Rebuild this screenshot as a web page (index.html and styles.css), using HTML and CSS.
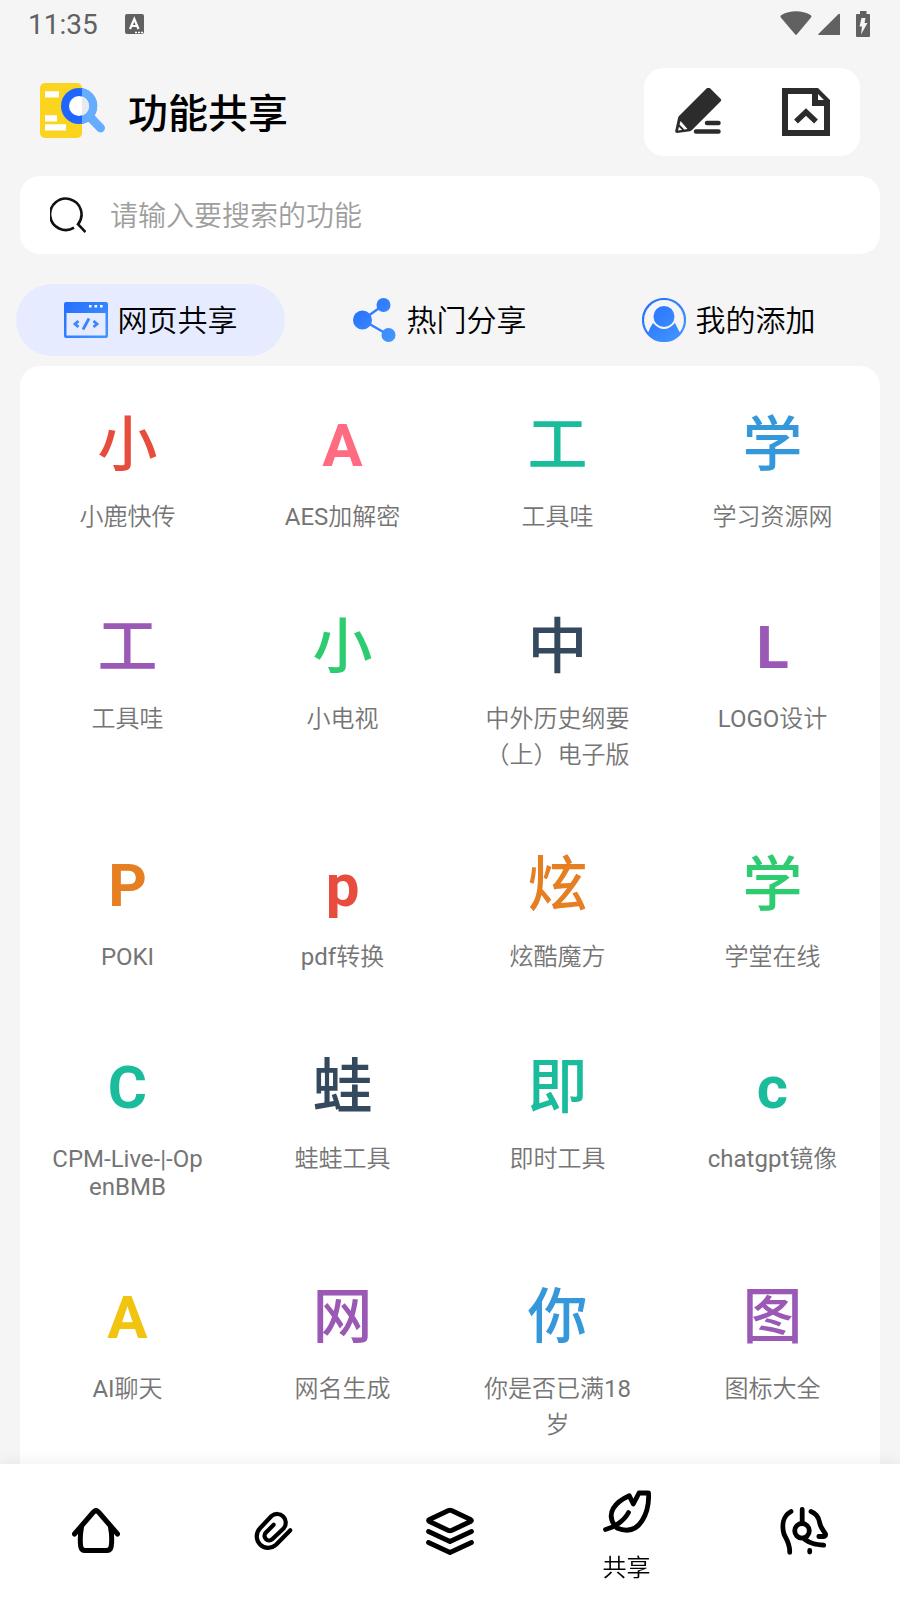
FILE: index.html
```html
<!DOCTYPE html>
<html lang="zh-CN">
<head>
    <meta charset="UTF-8">
    <meta name="viewport" content="width=device-width, initial-scale=1">
    <title>功能共享</title>
    <link rel="stylesheet" href="styles.css">
</head>
<body>
    <div class="status-bar">
        <span class="status-time">11:35</span>
        <svg class="status-app" width="20" height="20" viewBox="0 0 20 20">
            <rect width="19" height="20" rx="2" fill="#616161"/>
            <path d="M5 15L9.300 5L13.500 15M6.500 12H12" fill="none" stroke="#fff" stroke-width="2.200"/>
            <path d="M10 18.500H18" stroke="#fff" stroke-width="1.500" stroke-dasharray="2 1"/>
        </svg>
        <div class="status-icons">
            <svg width="32" height="26" viewBox="0 0 32 26">
                <path d="M.8 6.500Q-.2 5 1.500 4C10-.9 22-.9 30.500 4Q32 5 31 6.500L17 23.300Q16 24.500 15 23.300Z" fill="#616161"/>
            </svg>
            <svg width="22" height="26" viewBox="0 0 22 26">
                <path d="M20 3.500Q22 2 22 4V24H1Q-.5 24 .7 22.700Z" fill="#616161"/>
            </svg>
            <svg class="status-battery" width="14" height="26" viewBox="0 0 14 26">
                <path d="M4 0H10.500V3H13Q14 3 14 4V25Q14 26 13 26H1Q0 26 0 25V4Q0 3 1 3H4Z" fill="#616161"/>
                <path d="M5.500 7H9.500L8.500 12H11.500L5 23.500L6 15.500H3.500Z" fill="#f5f5f5"/>
            </svg>
        </div>
    </div>

    <header class="header">
        <svg class="logo" width="66" height="60" viewBox="0 0 66 60">
            <rect x="0" y="1" width="42" height="55" rx="5" fill="#fad41f"/>
            <path d="M5 9.300H19V15.500H5ZM5 33.300H17V39.500H5ZM5 42.300H26V48.500H5Z" fill="#fff"/>
            <path d="M50 35L60.500 46" stroke="#66adff" stroke-width="9" stroke-linecap="round"/>
            <circle cx="39" cy="24" r="18" fill="#1f66ff"/>
            <path d="M42 6.200A18 18 0 0 1 42 41.800Z" fill="#66adff"/>
            <circle cx="39" cy="24" r="10" fill="#fff"/>
            <path d="M42 14.500A10 10 0 0 1 42 33.500Z" fill="#e8eaf0"/>
        </svg>
        <h1 class="title">功能共享</h1>
        <div class="actions">
            <button class="action" aria-label="编辑">
                <svg width="48" height="48" viewBox="0 1 48 48">
                    <path d="M32.500 1.500Q34.500 0 36.300 1.500L46.500 11.700Q48 13 46.500 14.600L18 43Q17 44 16 44.200L3 46Q1 46 1.200 44L4 31Q4.200 30 5 29Z" fill="#2c2c2c"/>
                    <path d="M6.500 34L13.500 42L4 43.500Z" fill="#fff"/>
                    <path d="M4.500 38L9.500 43" stroke="#2c2c2c" stroke-width="1.800"/>
                    <path d="M33 36H44.500M22 44.500H44.500" stroke="#2c2c2c" stroke-width="4.500" stroke-linecap="round"/>
                </svg>
            </button>
            <button class="action" aria-label="上传">
                <svg width="48" height="48" viewBox="0 0 48 48">
                    <path d="M0 0H36L48 12V48H0ZM6 6V42H42V18H30V6ZM36 6V12H42Z" fill="#2c2c2c" fill-rule="evenodd"/>
                    <path d="M14 33.500L24 24L34 33.500" fill="none" stroke="#2c2c2c" stroke-width="5.500"/>
                </svg>
            </button>
        </div>
    </header>

    <label class="search">
        <svg width="36" height="36" viewBox="0 0 36 36" fill="none" stroke="#111" stroke-width="2.600">
            <path d="M24 30.700A15.700 15.700 0 1 1 28 27.200L35.500 35"/>
        </svg>
        <input class="search-input" type="text" placeholder="请输入要搜索的功能" aria-label="搜索功能">
    </label>

    <div class="tabs">
        <button class="tab active">
            <svg width="44" height="44" viewBox="0 0 44 44">
                <defs>
                    <linearGradient id="blue" x1="0" y1="0" x2="44" y2="44" gradientUnits="userSpaceOnUse">
                        <stop offset="0" stop-color="#246bff"/>
                        <stop offset="1" stop-color="#4599ff"/>
                    </linearGradient>
                </defs>
                <path d="M2 4H42Q44 4 44 6V38Q44 40 42 40H2Q0 40 0 38V6Q0 4 2 4ZM2.500 15V37.500H41.500V15Z" fill="url(#blue)" fill-rule="evenodd"/>
                <path d="M25 8.300H27.600M30.500 8.300H33.100M36 8.300H38.600" stroke="#fff" stroke-width="2.600"/>
                <path d="M14.500 23L11 26L14.500 29M29.500 23L33 26L29.500 29M25 20.500L19 31.500" fill="none" stroke="#3a84ff" stroke-width="2.800"/>
            </svg>
            <span class="tab-text">网页共享</span>
        </button>
        <button class="tab">
            <svg width="44" height="44" viewBox="0 0 44 44">
                <path d="M9.500 22L30.500 7M9.500 22L35.500 37" stroke="#3580ff" stroke-width="2.500"/>
                <g fill="url(#blue)">
                    <circle cx="9.500" cy="22" r="9.500"/>
                    <circle cx="30.500" cy="7" r="7"/>
                    <circle cx="35.500" cy="37" r="7"/>
                </g>
            </svg>
            <span class="tab-text">热门分享</span>
        </button>
        <button class="tab">
            <svg width="44" height="44" viewBox="0 0 44 44">
                <circle cx="22" cy="22" r="21" fill="none" stroke="url(#blue)" stroke-width="2.200"/>
                <circle cx="22" cy="18.500" r="10.500" fill="url(#blue)"/>
                <path d="M11 25Q22 37 33 25L37.500 34L39 34A21 21 0 0 1 5 34L6.500 34L8 30Z" fill="url(#blue)"/>
            </svg>
            <span class="tab-text">我的添加</span>
        </button>
    </div>

    <main class="grid">
        <a class="item red" href="#"><b class="letter han">小</b><span class="name">小鹿快传</span></a>
        <a class="item pink" href="#"><b class="letter">A</b><span class="name">AES加解密</span></a>
        <a class="item teal" href="#"><b class="letter han">工</b><span class="name">工具哇</span></a>
        <a class="item blue" href="#"><b class="letter han">学</b><span class="name">学习资源网</span></a>

        <a class="item purple" href="#"><b class="letter han">工</b><span class="name">工具哇</span></a>
        <a class="item green" href="#"><b class="letter han">小</b><span class="name">小电视</span></a>
        <a class="item navy" href="#"><b class="letter han">中</b><span class="name">中外历史纲要（上）电子版</span></a>
        <a class="item purple" href="#"><b class="letter">L</b><span class="name">LOGO设计</span></a>

        <a class="item orange" href="#"><b class="letter">P</b><span class="name">POKI</span></a>
        <a class="item red" href="#"><b class="letter">p</b><span class="name">pdf转换</span></a>
        <a class="item orange" href="#"><b class="letter han">炫</b><span class="name">炫酷魔方</span></a>
        <a class="item green" href="#"><b class="letter han">学</b><span class="name">学堂在线</span></a>

        <a class="item teal" href="#"><b class="letter">C</b><span class="name latin">CPM-Live-|-OpenBMB</span></a>
        <a class="item navy" href="#"><b class="letter han">蛙</b><span class="name">蛙蛙工具</span></a>
        <a class="item teal" href="#"><b class="letter han">即</b><span class="name">即时工具</span></a>
        <a class="item teal" href="#"><b class="letter">c</b><span class="name">chatgpt镜像</span></a>

        <a class="item yellow" href="#"><b class="letter">A</b><span class="name">AI聊天</span></a>
        <a class="item purple" href="#"><b class="letter han">网</b><span class="name">网名生成</span></a>
        <a class="item blue" href="#"><b class="letter han">你</b><span class="name">你是否已满18岁</span></a>
        <a class="item purple" href="#"><b class="letter han">图</b><span class="name">图标大全</span></a>
    </main>

    <nav class="nav">
        <a class="nav-item" href="#" aria-label="首页">
            <svg class="nav-icon" viewBox="0 0 48 48" stroke-width="5">
                <path d="M2.500 27L21.500 5Q24 2.500 26.500 5L45.500 27M9.500 20C8 28 8 34 8.700 39.500Q9.500 43.500 13 43.500H34.500Q38.500 43.500 39.200 39.500C40 34 40 28 38.500 20"/>
            </svg>
        </a>
        <a class="nav-item" href="#" aria-label="附件">
            <svg class="nav-icon" viewBox="0 0 48 48" stroke-width="4.200">
                <path d="M41.300 23.200L27 37.800A11.500 11.500 0 0 1 10.800 21.500L22.500 9A8.700 8.700 0 0 1 34.800 21.200L23.200 32.200A4.600 4.600 0 0 1 16.700 25.700L24.700 17.800"/>
            </svg>
        </a>
        <a class="nav-item" href="#" aria-label="分类">
            <svg class="nav-icon" viewBox="0 0 48 48" stroke-width="4.800">
                <path d="M3.500 12.500L22.500 3.500Q24 3 25.500 3.500L44.500 12.500Q46.500 13.500 44.500 14.500L25.500 23.500Q24 24 22.500 23.500L3.500 14.500Q1.500 13.500 3.500 12.500ZM2.500 24.500L24 34.500L45.500 24.500M2.500 35.500L24 45.500L45.500 35.500"/>
            </svg>
        </a>
        <a class="nav-item active" href="#">
            <svg class="nav-icon" viewBox="0 0 48 48" stroke-width="4.800">
                <path d="M2.500 41.500C11 39.500 21 33 25.500 24.500M11.500 37.500C3 25 12 14 26.300 7.700L30.300 16L36 5H45.500C46.500 22 38 50 14 40"/>
            </svg>
            <span class="nav-label">共享</span>
        </a>
        <a class="nav-item" href="#" aria-label="我的">
            <svg class="nav-icon" viewBox="0 0 48 48" stroke-width="4.800">
                <path d="M11 4.500C3 9 1.500 18 4 27C6 32 10 36 9.700 45.300M22.200 2.500V15M31 4.500C36 6.500 38.500 10 39.500 15C40 20 43 22.500 45.500 27Q46 29.500 43.500 29.500H38.800M25 32.500C31 37 36 37.500 43.700 38.200M29.700 43.500V45"/>
                <circle cx="22" cy="23.800" r="7.300"/>
            </svg>
        </a>
    </nav>
</body>
</html>
```
FILE: styles.css
```css
* {
    box-sizing: border-box;
}

body {
    margin: 0;
    height: 100vh;
    display: flex;
    flex-direction: column;
    background: #f5f5f5;
    color: #000;
    font-family: Roboto, "Noto Sans CJK SC", sans-serif;
    font-size: 24px;
}

button {
    border: 0;
    padding: 0;
    background: none;
    color: inherit;
    font: inherit;
}
a {
    color: inherit;
    text-decoration: none;
}
svg {
    display: block;
    flex: none;
}

.status-bar {
    display: flex;
    align-items: center;
    height: 48px;
    padding: 0 30px 0 28px;
    color: #616161;
}
.status-time {
    padding-top: 2px;
    font-size: 28px;
    font-weight: 450;
    line-height: 46px;
}
.status-app {
    margin-left: 27px;
}
.status-icons {
    display: flex;
    gap: 6px;
    margin-left: auto;
}
.status-battery {
    margin-left: 10px;
}

.header {
    display: flex;
    align-items: center;
    padding: 20px 40px;
}
.title {
    margin: 0 0 0 22px;
    padding-top: 6px;
    font-size: 40px;
    font-weight: 500;
    line-height: 56px;
}
.actions {
    display: flex;
    margin-left: auto;
    background: #fff;
    border-radius: 20px;
}
.action {
    padding: 20px 30px;
}

.search {
    display: flex;
    align-items: center;
    gap: 24px;
    margin: 0 20px;
    padding: 0 30px;
    background: #fff;
    border-radius: 20px;
}
.search-input {
    flex: 1;
    min-width: 0;
    height: 78px;
    padding: 2px 0 0;
    border: 0;
    outline: 0;
    background: none;
    font: inherit;
    font-size: 28px;
}
.search-input::placeholder {
    color: #9e9e9e;
    font-weight: 350;
}

.tabs {
    display: grid;
    grid-template-columns: repeat(3, 1fr);
    gap: 20px;
    padding: 30px 37px 10px 16px;
}
.tab {
    display: flex;
    align-items: center;
    justify-content: center;
    gap: 10px;
    height: 72px;
    border-radius: 36px;
    font-size: 30px;
    font-weight: 350;
}
.tab-text {
    padding-bottom: 4px;
}
.tab.active {
    background: #e6ebff;
}

.grid {
    flex: 1;
    min-height: 0;
    display: grid;
    grid-template-columns: repeat(4, 1fr);
    align-content: start;
    margin: 0 20px;
    background: #fff;
    border-radius: 20px 20px 0 0;
    overflow-y: auto;
    scrollbar-width: none;
}
.item {
    display: flex;
    flex-direction: column;
    gap: 18px;
    padding: 45px 27px 33px;
    text-align: center;
}
.letter {
    font-size: 60px;
    font-weight: 700;
    line-height: 70px;
}
.letter.han {
    font-weight: 500;
}
.name {
    color: #757575;
    font-family: Roboto, "Noto Sans CJK SC DemiLight", "Noto Sans CJK SC", sans-serif;
    line-height: 36px;
    word-break: break-all;
}
/* latin lines sit closer together than chinese ones */
.name.latin {
    padding: 4px 0;
    line-height: 28px;
}

.red { color: #e74c3c; }
.pink { color: #ff6b81; }
.teal { color: #1abc9c; }
.blue { color: #3498db; }
.purple { color: #9b59b6; }
.green { color: #2ecc71; }
.navy { color: #34495e; }
.orange { color: #e67e22; }
.yellow { color: #f1c40f; }

.nav {
    position: relative;
    display: grid;
    grid-template-columns: repeat(5, 1fr);
    height: 136px;
    padding: 0 8px 2px 7px;
    background: #fff;
    box-shadow: 0 0 16px rgba(0, 0, 0, 0.08);
}
.nav-item {
    display: flex;
    flex-direction: column;
    align-items: center;
    justify-content: center;
    gap: 14px;
}
.nav-item.active {
    padding-top: 12px;
}
.nav-icon {
    width: 48px;
    height: 48px;
    fill: none;
    stroke: #000;
    stroke-linecap: round;
    stroke-linejoin: round;
}
.nav-label {
    font-weight: 350;
    line-height: 36px;
}
```
